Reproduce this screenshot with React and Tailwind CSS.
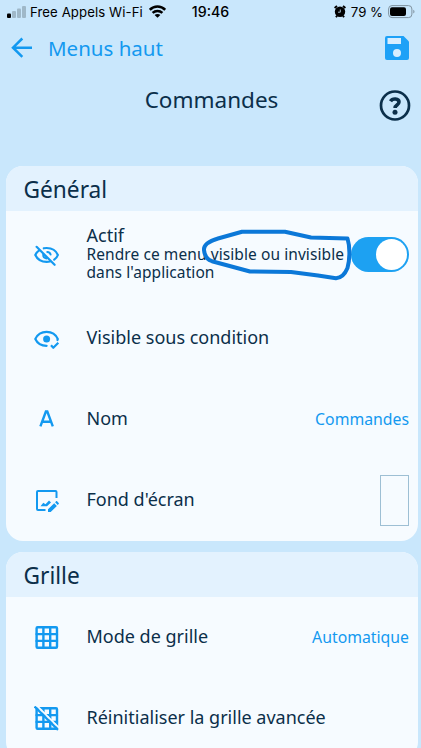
import React from "react";

const stroke = {
  fill: "none",
  stroke: "currentColor",
  strokeLinecap: "round",
  strokeLinejoin: "round",
};

function EyeOffIcon() {
  return (
    <svg width="26" height="26" viewBox="0 0 26 26" {...stroke} strokeWidth="2.2">
      <path d="M5.200 8.300C3.200 9.600 2 11.400 1.300 13c1.900 4 6 6.900 11.400 6.900 1.200 0 2.200-.1 3.200-.4" />
      <path d="M9.800 6.300C10.700 6.100 11.700 6 12.700 6c5.300 0 9.500 3 11.200 7-.5 1.500-1.800 3.300-3.700 4.600" />
      <path d="M9.300 12.200c-.3 2.300 1.100 3.900 3.100 4.200M13.300 9.900c1.800.1 3 1.200 3.300 2.700" strokeWidth="2" />
      <path d="M2.600 4.800L20.600 22.800" />
    </svg>
  );
}

function EyeCheckIcon() {
  return (
    <svg width="26" height="26" viewBox="0 0 26 26" {...stroke} strokeWidth="2.200">
      <path d="M12.600 19.800C7.200 19.800 3.200 17 1.300 13 3.200 9 7.400 5.900 12.600 5.900s9.400 3.100 11.200 7.100l-.4 1" />
      <path d="M17 19.300l2.300 2.500 5-5" strokeLinecap="butt" />
      <circle cx="12.600" cy="12.900" r="3.500" fill="currentColor" stroke="none" />
    </svg>
  );
}

function ImageEditIcon() {
  return (
    <svg width="26" height="26" viewBox="0 0 26 26" {...stroke} strokeWidth="2">
      <path d="M11.500 22H4c-.7 0-1-.3-1-1V4c0-.7.3-1 1-1h17.500c.7 0 1 .3 1 1v6" strokeLinecap="butt" />
      <path d="M6.500 18.200l2.800-3.400 2.200 1.400 3.500-3.600 2 1.800-4 3.800z" fill="currentColor" stroke="none" />
      <path d="M14 21.300l6.200-6.100 2.700 2.700-6.200 6.100H14zM21.100 14.300l1-1c.3-.3.700-.3 1 0l1.600 1.600c.3.300.3.700 0 1l-1 1z" fill="currentColor" stroke="none" />
    </svg>
  );
}

function LetterIcon() {
  return (
    <svg width="26" height="26" viewBox="0 0 26 26" {...stroke} strokeWidth="2.400" strokeLinecap="butt" strokeLinejoin="miter">
      <path d="M6.400 19.300L11.900 4.500h1.400l5.500 14.800M8.300 14.700h8.600" />
    </svg>
  );
}

function GridIcon({ off = false }) {
  return (
    <svg width="26" height="26" viewBox="0 0 26 26" {...stroke} strokeWidth="2.400">
      <rect x="2.600" y="2.300" width="20.400" height="20.400" rx="1" />
      <path d="M9.400 2.300v20.400M16.200 2.300v20.400M2.600 9.100H23M2.600 15.900H23" />
      {off && (
        <>
          <path d="M2.700 -.4L26 22.900" stroke="#f6fbff" strokeWidth="1.900" />
          <path d="M.6 .5L24 23.900" strokeWidth="2.200" strokeLinecap="butt" />
        </>
      )}
    </svg>
  );
}

function Row({ icon, label, className = "h-[81px]", children }) {
  return (
    <div className={"flex shrink-0 items-center pl-[28px] pr-[9px] " + className}>
      <span className="w-[52.500px] shrink-0 text-[#1399f0]">{icon}</span>
      <span className="grow whitespace-nowrap pb-[4px] text-[18px] leading-6">{label}</span>
      {children}
    </div>
  );
}

function Card({ title, className = "", children }) {
  return (
    <section className={"ml-[6px] flex w-[412px] shrink-0 flex-col overflow-hidden rounded-[17px] bg-[#f6fbff] " + className}>
      <h2 className="flex h-[45px] shrink-0 items-center bg-[#e3f2fe] pl-[17.500px] pt-[3px] text-[22.700px] leading-none">{title}</h2>
      {children}
    </section>
  );
}

export default function App() {
  return (
    <main className="relative flex h-[748px] w-[421px] flex-col overflow-hidden bg-[#c9e7fc] font-['Noto_Sans',sans-serif] text-[#0b2f4a]">
      <div className="grid h-6 shrink-0 grid-cols-[1fr_auto_1fr] items-center pl-[7px] pr-[6px] font-['Inter',sans-serif] leading-6 text-black">
        <div className="flex items-center">
          <svg className="-mt-px" width="19" height="12" viewBox="0 0 19 12" fill="#9fb8c8">
            <rect x="0" y="7.500" width="4" height="4.500" rx="1" fill="#000" />
            <rect x="5" y="5" width="4" height="7" rx="1" />
            <rect x="10" y="2.500" width="4" height="9.500" rx="1" />
            <rect x="15" y="0" width="4" height="12" rx="1" />
          </svg>
          <span className="-mt-px ml-[4px] whitespace-nowrap text-[13.200px] tracking-[0.090px]">Free Appels Wi-Fi</span>
          <svg className="-mt-px ml-[6px]" width="17" height="13" viewBox="0 0 17 13" fill="none" stroke="#000" strokeWidth="2.500">
            <path d="M.8 4.800C5 .5 12 .5 16.200 4.800M3.600 7.900c2.800-2.700 7-2.700 9.800 0" />
            <path d="M8.500 12.800L5.600 10c1.600-1.500 4.200-1.500 5.800 0z" fill="#000" stroke="none" />
          </svg>
        </div>
        <span className="-mt-px -ml-px text-[14.200px] font-medium">19:46</span>
        <div className="flex items-center justify-end">
          <svg className="-mt-px" width="12" height="13" viewBox="0 0 12 13">
            <path d="M.6 3L3 1M11.400 3L9 1M2 12.300l1-1.500M10 12.300l-1-1.500" stroke="#000" strokeWidth="1.900" />
            <circle cx="6" cy="6.800" r="5.200" fill="#000" />
            <path d="M6.300 4.500v2.700H4" fill="none" stroke="#c9e7fc" strokeWidth=".8" />
          </svg>
          <span className="-mt-px ml-[5px] whitespace-nowrap text-[13.200px]">79 %</span>
          <svg className="-mt-px ml-[5px]" width="27" height="14" viewBox="0 0 27 14">
            <rect x=".6" y=".6" width="23.300" height="12" rx="3.400" fill="none" stroke="#7f929f" />
            <rect x="2" y="2.200" width="16" height="8.800" rx="2" fill="#000" />
            <path d="M25.300 4.800c1.600.8 1.600 3 0 3.800z" fill="#7f929f" />
          </svg>
        </div>
      </div>

      <header className="flex h-12 shrink-0 items-center pl-[10px] pr-[11px] text-[#1399f0]">
        <svg width="24" height="24" viewBox="0 0 24 24" {...stroke} strokeWidth="2.500">
          <path d="M22 11.700H2.800M12.300 2.500L3 11.700l9.300 9.200" strokeLinecap="butt" strokeLinejoin="miter" />
        </svg>
        <span className="ml-[14px] grow text-[20.500px] leading-6">Menus haut</span>
        <svg width="26" height="26" viewBox="0 0 26 26">
          <path d="M3 1h16.500L25 6.500V23a2 2 0 0 1-2 2H3a2 2 0 0 1-2-2V3a2 2 0 0 1 2-2z" fill="#1da1f7" />
          <rect x="3.500" y="3" width="13.500" height="6" fill="#d8eeff" />
          <circle cx="13" cy="18" r="4" fill="#d8eeff" />
        </svg>
      </header>

      <div className="grid h-[94px] shrink-0 grid-cols-[1fr_auto_1fr] items-start">
        <h1 className="col-start-2 pl-[2px] pt-[14px] text-[22.500px] leading-7">Commandes</h1>
        <svg className="mr-[10px] mt-[17px] justify-self-end" width="32" height="32" viewBox="0 0 32 32" {...stroke} strokeWidth="2.700">
          <circle cx="16" cy="16.500" r="14" />
          <path d="M11.500 12.300c2-3.300 8.500-3 8.500.8 0 3-3.900 2.800-3.900 5.800" strokeWidth="3.600" strokeLinecap="butt" />
          <circle cx="16" cy="23.300" r="2.500" fill="currentColor" stroke="none" />
        </svg>
      </div>

      <Card title="Général">
        <Row
          className="h-[87px]"
          icon={<EyeOffIcon />}
          label={
            <span className="flex flex-col">
              <span className="leading-[20px]">Actif</span>
              <span className="text-[15.500px] leading-[18px] tracking-[0.080px]">
                Rendre ce menu visible ou invisible
                <br />
                dans l'application
              </span>
            </span>
          }
        >
          <span className="flex h-[35px] w-[58px] shrink-0 items-center justify-end rounded-full bg-[#1da1f2] p-[2px]">
            <span className="size-[31px] rounded-full bg-white" />
          </span>
        </Row>
        <Row icon={<EyeCheckIcon />} label="Visible sous condition" />
        <Row icon={<LetterIcon />} label="Nom">
          <span className="text-[15.800px] text-[#1399f0]">Commandes</span>
        </Row>
        <Row icon={<ImageEditIcon />} label="Fond d'écran">
          <span className="h-[51px] w-[29px] border border-[#9dbfd4]" />
        </Row>
      </Card>

      <Card title="Grille" className="mt-[11px]">
        <Row icon={<GridIcon />} label="Mode de grille">
          <span className="text-[15.800px] text-[#1399f0]">Automatique</span>
        </Row>
        <Row icon={<GridIcon off />} label="Réinitialiser la grille avancée" />
      </Card>

      <svg className="absolute left-[195px] top-[225px]" width="160" height="60" viewBox="195 225 160 60" {...stroke} stroke="#0b78d8" strokeWidth="4">
        <path d="M347.500 238.500L311 237.500 285 231.800H242L218 238.500C208 241.500 203.500 245 204 250c.5 6 3 9.500 8 11.200L250 271.500l41 .5 27 3.500 18 2.800c5-.3 9-4.300 11.500-10.300 2-7 3-20 0-29.500z" />
      </svg>
    </main>
  );
}
